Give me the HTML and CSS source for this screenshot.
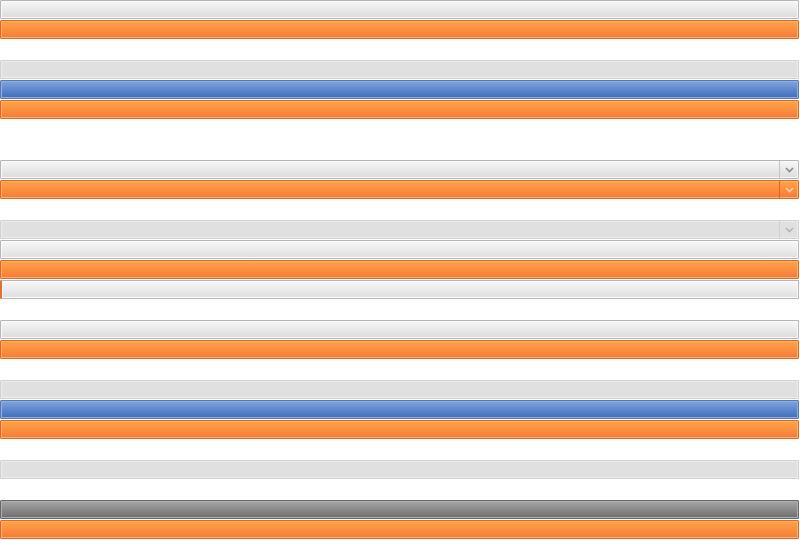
FILE: index.html
```html
<!DOCTYPE html>
<html lang="en">

<head>
    <meta charset="UTF-8">
    <title>Bars</title>
    <link rel="stylesheet" href="styles.css">
</head>

<body>
    <div class="stack">
        <div class="bar normal"></div>
        <div class="bar hot"></div>
        <div class="gap"></div>
        <div class="bar disabled"></div>
        <div class="bar pressed"></div>
        <div class="bar hot"></div>
        <div class="gap"></div>
        <div class="gap"></div>

        <div class="bar combo normal">
            <span class="arrow"><svg width="9" height="6" viewBox="0 0 9 6"><path d="M1 1 L4.5 4.5 L8 1" fill="none" stroke="currentColor" stroke-width="1.6"/></svg></span>
        </div>
        <div class="bar combo hot">
            <span class="arrow"><svg width="9" height="6" viewBox="0 0 9 6"><path d="M1 1 L4.5 4.5 L8 1" fill="none" stroke="currentColor" stroke-width="1.6"/></svg></span>
        </div>
        <div class="gap"></div>
        <div class="bar combo disabled">
            <span class="arrow"><svg width="9" height="6" viewBox="0 0 9 6"><path d="M1 1 L4.5 4.5 L8 1" fill="none" stroke="currentColor" stroke-width="1.6"/></svg></span>
        </div>
        <div class="bar light"></div>
        <div class="bar hot"></div>
        <div class="bar light marked"></div>
        <div class="gap"></div>

        <div class="bar normal"></div>
        <div class="bar hot"></div>
        <div class="gap"></div>
        <div class="bar disabled"></div>
        <div class="bar pressed"></div>
        <div class="bar hot"></div>
        <div class="gap"></div>
        <div class="bar disabled"></div>
        <div class="gap"></div>
        <div class="bar dark"></div>
        <div class="bar hot"></div>
    </div>
</body>

</html>
```

FILE: styles.css
```css
body {
    margin: 0;
    background-color: white;
    font-family: "Liberation Sans", Arial, sans-serif;
}

.stack {
    display: flex;
    flex-direction: column;
    width: 799px;
}

.gap {
    height: 20px;
}

.bar {
    height: 19px;
    margin-bottom: 1px;
    box-sizing: border-box;
    border: 1px solid #b5b5b5;
    border-radius: 1px;
    display: flex;
    justify-content: flex-end;
}

.normal {
    background: linear-gradient(#f7f7f7, #dcdcdc);
    box-shadow: inset 0 0 0 1px #fafafa;
}

.light {
    background: linear-gradient(#f7f8f8, #dedede);
    box-shadow: inset 0 0 0 1px #fcfcfc;
}

.marked {
    border-left: 2px solid #e8702e;
}

.hot {
    border-color: #e0652a;
    background: linear-gradient(#ffa444, #f57b3c);
    box-shadow: inset 0 0 0 1px #ffb36e;
}

.pressed {
    border-color: #5a77ad;
    background: linear-gradient(#80a5de, #3f6dbd);
    box-shadow: inset 0 0 0 1px #8fb0e2;
}

.disabled {
    border-color: #d0d0d0;
    background-color: #e0e0e0;
    box-shadow: inset 0 0 0 1px #ececec;
}

.dark {
    border-color: #666666;
    background: linear-gradient(#a6a6a6, #6e6e6e);
    box-shadow: inset 0 0 0 1px #b0b0b0;
}

.arrow {
    width: 18px;
    border-left: 1px solid #c4c4c4;
    display: flex;
    align-items: center;
    justify-content: center;
    color: #8a8a8a;
}

.hot .arrow {
    border-left-color: #d9652c;
    color: #fbd0a8;
}

.disabled .arrow {
    border-left-color: #cfcfcf;
    color: #b5b5b5;
}
```
